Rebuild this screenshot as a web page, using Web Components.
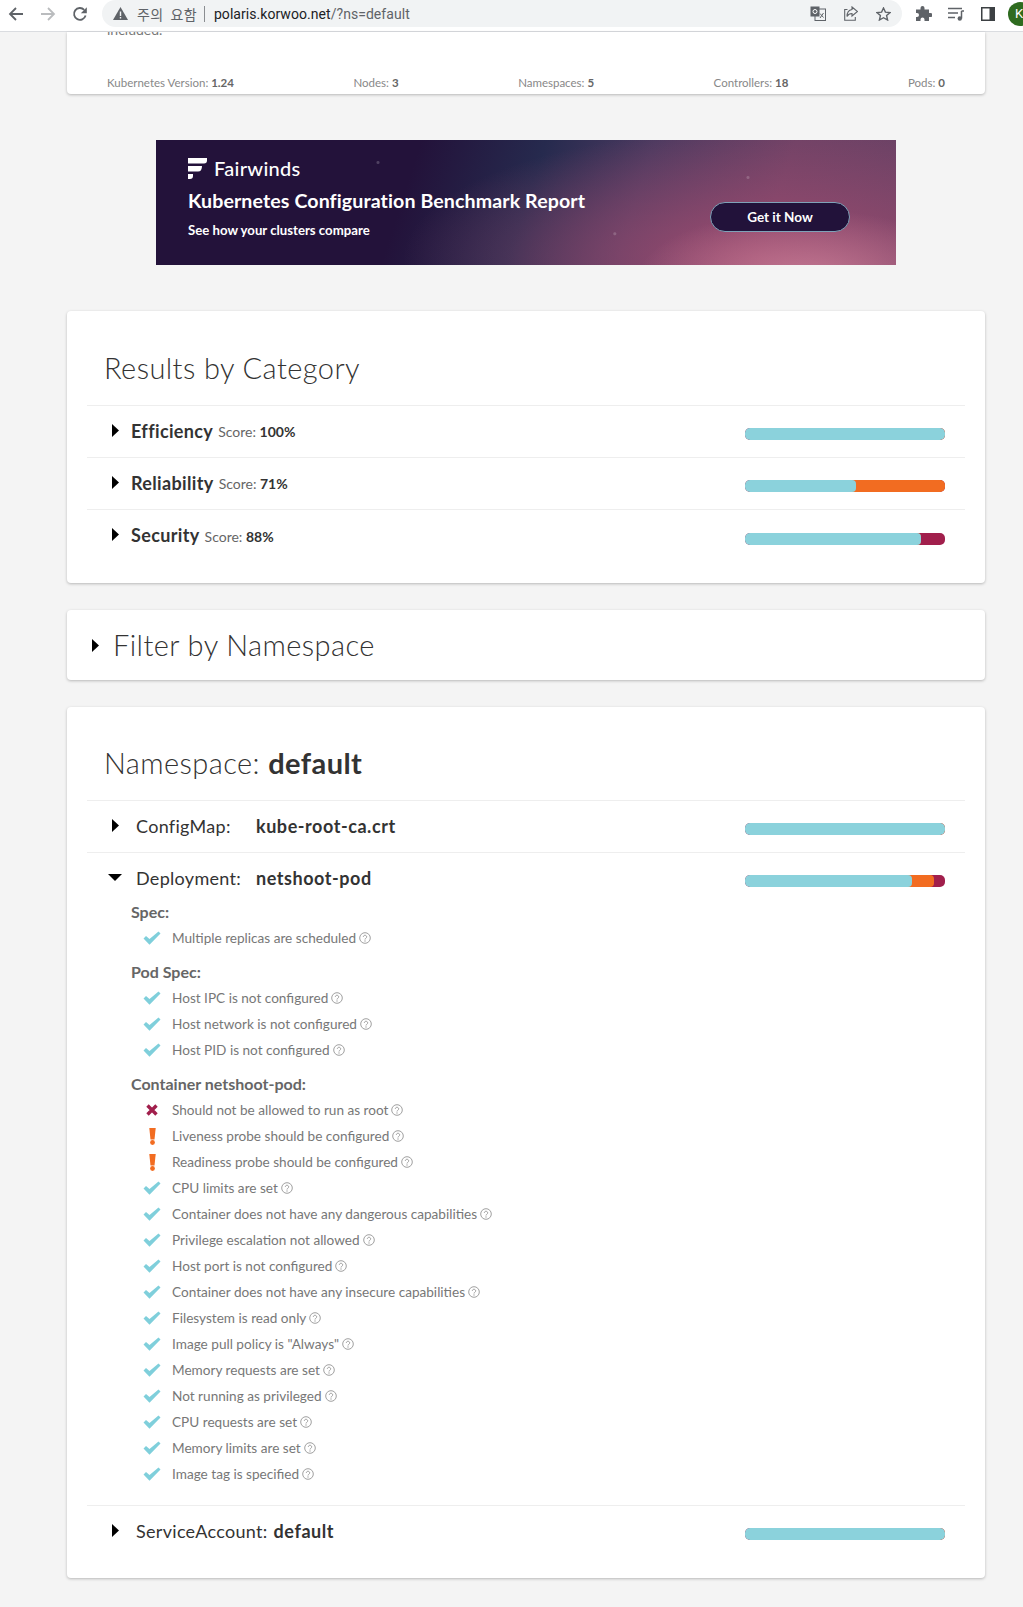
<!DOCTYPE html>
<html lang="ko">
<head>
<meta charset="utf-8">
<title>Polaris</title>
<style>
    html, body { margin: 0; background: #f4f4f4; }
    body { font-family: Lato, "Noto Sans", sans-serif; color: #333; }
    .page { display: block; padding: 0 38px 30px 67px; }
    b { font-weight: 700; }
</style>
</head>
<body>
<app-toolbar></app-toolbar>
<div class="page">
    <cluster-summary>
        <stat-item label="Kubernetes Version:" value="1.24"></stat-item>
        <stat-item label="Nodes:" value="3"></stat-item>
        <stat-item label="Namespaces:" value="5"></stat-item>
        <stat-item label="Controllers:" value="18"></stat-item>
        <stat-item label="Pods:" value="0"></stat-item>
    </cluster-summary>

    <promo-banner></promo-banner>

    <ui-card heading="Results by Category">
        <category-row name="Efficiency" score="100%" pass="100"></category-row>
        <category-row name="Reliability" score="71%" pass="55.5" warn="44.5"></category-row>
        <category-row name="Security" score="88%" pass="88" fail="12"></category-row>
    </ui-card>

    <filter-card></filter-card>

    <ui-card heading="Namespace:" strong="default">
        <resource-row kind="ConfigMap:" name="kube-root-ca.crt" pass="100"></resource-row>
        <resource-row kind="Deployment:" name="netshoot-pod" pass="83.5" warn="11" fail="5.5" open>
            <check-group heading="Spec:">
                <check-item>Multiple replicas are scheduled</check-item>
            </check-group>
            <check-group heading="Pod Spec:">
                <check-item>Host IPC is not configured</check-item>
                <check-item>Host network is not configured</check-item>
                <check-item>Host PID is not configured</check-item>
            </check-group>
            <check-group heading="Container netshoot-pod:">
                <check-item status="fail">Should not be allowed to run as root</check-item>
                <check-item status="warn">Liveness probe should be configured</check-item>
                <check-item status="warn">Readiness probe should be configured</check-item>
                <check-item>CPU limits are set</check-item>
                <check-item>Container does not have any dangerous capabilities</check-item>
                <check-item>Privilege escalation not allowed</check-item>
                <check-item>Host port is not configured</check-item>
                <check-item>Container does not have any insecure capabilities</check-item>
                <check-item>Filesystem is read only</check-item>
                <check-item>Image pull policy is "Always"</check-item>
                <check-item>Memory requests are set</check-item>
                <check-item>Not running as privileged</check-item>
                <check-item>CPU requests are set</check-item>
                <check-item>Memory limits are set</check-item>
                <check-item>Image tag is specified</check-item>
            </check-group>
        </resource-row>
        <resource-row kind="ServiceAccount:" name="default" pass="100" flow></resource-row>
    </ui-card>
</div>

<script>
const CARET_RIGHT = '<svg width="7" height="13" viewBox="0 0 7 13"><path d="M0 0L7 6.5L0 13Z" fill="#000"/></svg>';
const CARET_DOWN = '<svg width="14" height="7" viewBox="0 0 14 7"><path d="M0 0H14L7 7Z" fill="#000"/></svg>';

class AppToolbar extends HTMLElement {
    constructor() {
        super();
        this.attachShadow({ mode: 'open' });
        this.shadowRoot.innerHTML = `
            <style>
                :host { display: flex; height: 31px; background: #fff; border-bottom: 1px solid #dadce0; overflow: hidden; font-family: Roboto, "Liberation Sans", sans-serif; }
                .nav { display: flex; align-items: center; gap: 16px; height: 27px; padding-left: 8px; width: 102px; box-sizing: border-box; flex: none; }
                .omnibox { display: flex; align-items: center; width: 800px; height: 27px; background: #f1f3f4; border-radius: 14px; box-sizing: border-box; padding-left: 11px; font-size: 14px; color: #5f6368; flex: none; }
                .warn { font-family: "Noto Sans CJK KR", sans-serif; font-size: 14px; margin-left: 9px; word-spacing: 3px; letter-spacing: .3px; }
                .sep { width: 1px; height: 16px; background: #8a8d91; margin: 0 9px 0 7px; }
                .url { color: #202124; letter-spacing: .05px; }
                .url span { color: #5f6368; }
                .right { margin-left: auto; display: flex; align-items: center; gap: 18px; padding-right: 11px; }
                .tools { display: flex; align-items: center; gap: 16px; height: 27px; margin-left: 14px; flex: none; }
                svg { flex: none; display: block; }
                .avatar { width: 24px; height: 24px; border-radius: 50%; background: #2e6b1f; color: #fff; font-size: 13px; line-height: 24px; text-indent: 7px; flex: none; margin-left: -3px; }
            </style>
            <div class="nav">
                <svg width="16" height="16" viewBox="0 0 16 16"><path d="M15 8H2.5M8 2L2 8l6 6" fill="none" stroke="#5f6368" stroke-width="1.8"/></svg>
                <svg width="16" height="16" viewBox="0 0 16 16"><path d="M1 8h12.5M8 2l6 6-6 6" fill="none" stroke="#babcbe" stroke-width="1.8"/></svg>
                <svg width="16" height="16" viewBox="0 0 16 16"><path d="M13.6 9.6A5.9 5.9 0 1 1 12.2 3.8" fill="none" stroke="#5f6368" stroke-width="1.8"/><path d="M14.8 1.2v6h-6z" fill="#5f6368"/></svg>
            </div>
            <div class="omnibox">
                <svg width="15" height="13" viewBox="0 0 15 13"><path d="M7.5 0L15 13H0Z" fill="#5f6368"/><path d="M6.8 4.5h1.4v4.5H6.8zM6.8 10h1.4v1.5H6.8z" fill="#f1f3f4"/></svg>
                <span class="warn">주의 요함</span>
                <span class="sep"></span>
                <span class="url">polaris.korwoo.net<span>/?ns=default</span></span>
                <div class="right">
                    <svg width="16" height="15" viewBox="0 0 16 15"><rect x="5" y="3" width="10.5" height="11.5" fill="none" stroke="#5f6368"/><rect x=".5" y=".5" width="9" height="10" fill="#5f6368"/><circle cx="5" cy="5.5" r="2" fill="none" stroke="#fff"/><path d="M10 7.5l3.5 4M13.5 7l-3.5 5" stroke="#5f6368" fill="none"/></svg>
                    <svg width="14" height="15" viewBox="0 0 14 15"><path d="M3.5 3.5H.7v10.800h10.600V11" fill="none" stroke="#5f6368" stroke-width="1.1"/><path d="M8 1l5.5 4.5L8 10V7.500C5.500 7.500 4 8.500 3 10.500 3 6.500 5 4 8 3.500Z" fill="none" stroke="#5f6368" stroke-width="1.1"/></svg>
                    <svg width="15" height="14" viewBox="0 0 15 14"><path d="M7.5 1l1.900 4.100 4.600.5-3.400 3 1 4.400-4.100-2.300L3.400 13l1-4.400-3.400-3 4.600-.5z" fill="none" stroke="#5f6368" stroke-width="1.4"/></svg>
                </div>
            </div>
            <div class="tools">
                <svg width="16" height="15" viewBox="0 0 16 15"><path d="M0 3.5h4.500V2a2 2 0 0 1 4 0v1.500H13V7h1.500a2 2 0 0 1 0 4H13v4H8.500v-1.500a2 2 0 0 0-4 0V15H0v-4h1a2 2 0 0 0 0-4H0z" fill="#5f6368"/></svg>
                <svg width="16" height="14" viewBox="0 0 16 14"><path d="M0 1.500h14M0 6h10M0 10.500h7" stroke="#5f6368" stroke-width="1.5" fill="none"/><path d="M13.500 4v7.500M13.500 4H16" stroke="#5f6368" stroke-width="1.5"/><circle cx="11.800" cy="11.500" r="2.200" fill="#5f6368"/></svg>
                <svg width="14" height="14" viewBox="0 0 14 14" style="margin-left:1px"><rect width="14" height="14" fill="#3c4043"/><rect x="1.500" y="1.500" width="7" height="11" fill="#fff"/></svg>
                <div class="avatar">K</div>
            </div>
        `;
    }
}

class ClusterSummary extends HTMLElement {
    constructor() {
        super();
        this.attachShadow({ mode: 'open' });
        this.shadowRoot.innerHTML = `
            <style>
                :host { display: block; height: 62px; background: #fff; border-radius: 0 0 4px 4px; box-shadow: 0 1px 3px rgba(0,0,0,.25); }
                .clip { height: 5px; overflow: hidden; padding-left: 40px; font-size: 14px; color: #777; }
                .clip div { margin-top: -11px; line-height: 18px; }
                .stats { display: flex; justify-content: space-between; padding: 37px 40px 0; }
            </style>
            <div class="clip"><div>included.</div></div>
            <div class="stats"><slot></slot></div>
        `;
    }
}

class StatItem extends HTMLElement {
    constructor() {
        super();
        this.attachShadow({ mode: 'open' });
        this.shadowRoot.innerHTML = `
            <style>
                :host { display: block; font-size: 11.5px; line-height: 18px; color: #888; }
                b { color: #666; }
            </style>
            ${this.getAttribute('label')} <b>${this.getAttribute('value')}</b>
        `;
    }
}

class PromoBanner extends HTMLElement {
    constructor() {
        super();
        this.attachShadow({ mode: 'open' });
        this.shadowRoot.innerHTML = `
            <style>
                :host { display: flex; align-items: stretch; justify-content: space-between; width: 740px; height: 125px; margin: 46px auto; box-sizing: border-box; padding: 16px 46px 0 32px; color: #fff; font-weight: 700;
                    background:
                        radial-gradient(circle at 30% 18%, rgba(255,255,255,.2) 0 1px, transparent 2px),
                        radial-gradient(circle at 62% 75%, rgba(255,255,255,.18) 0 1px, transparent 2px),
                        radial-gradient(circle at 80% 30%, rgba(255,255,255,.18) 0 1px, transparent 2px),
                        radial-gradient(ellipse 170px 70px at 88% 112%, rgba(200,125,150,.9), transparent),
                        radial-gradient(ellipse 360px 130px at 82% 95%, rgba(158,76,112,.95), transparent),
                        linear-gradient(108deg, #23123a 0%, #23123a 34%, #262a4e 50%, #4c3a60 64%, #704266 82%, #6a4265 100%); }
                .logo { display: flex; align-items: center; gap: 7px; font-size: 20px; font-weight: 500; height: 24px; letter-spacing: .3px; }
                h2 { font-size: 19.6px; line-height: 26px; margin: 8px 0 0; font-weight: 700; letter-spacing: .1px; }
                p { font-size: 13.2px; line-height: 18px; margin: 7px 0 0; }
                .btn { align-self: flex-start; margin-top: 46px; width: 140px; height: 30px; box-sizing: border-box; border: 1px solid #7fa2b8; border-radius: 15px; background: #22123a; font-size: 13.5px; line-height: 28px; text-align: center; }
            </style>
            <div>
                <div class="logo">
                    <svg width="19" height="21" viewBox="0 0 19 21"><path d="M0 0h19v2.500q0 3-3 3H0zM0 8h14q0 5.500-4 5.500H0zM0 16h5v2q0 3-3 3H0z" fill="#fff"/></svg>
                    Fairwinds
                </div>
                <h2>Kubernetes Configuration Benchmark Report</h2>
                <p>See how your clusters compare</p>
            </div>
            <div class="btn">Get it Now</div>
        `;
    }
}

class UiCard extends HTMLElement {
    constructor() {
        super();
        const strong = this.getAttribute('strong');
        this.attachShadow({ mode: 'open' });
        this.shadowRoot.innerHTML = `
            <style>
                :host { display: block; margin-bottom: 27px; padding: 0 20px 21px; background: #fff; border-radius: 4px; box-shadow: 0 1px 3px rgba(0,0,0,.25); }
                h2 { margin: 0; padding: 37px 17px 17px; font-size: 29px; line-height: 40px; font-weight: 300; color: #333; letter-spacing: .42px; }
                :host([strong]) h2 { padding-top: 36px; }
                b { font-weight: 700; }
            </style>
            <h2>${this.getAttribute('heading')}${strong ? ` <b>${strong}</b>` : ''}</h2>
            <slot></slot>
        `;
    }
}

class StatusBar extends HTMLElement {
    constructor() {
        super();
        const pass = this.getAttribute('pass') || 0;
        const warn = this.getAttribute('warn') || 0;
        this.attachShadow({ mode: 'open' });
        this.shadowRoot.innerHTML = `
            <style>
                :host { display: flex; width: 200px; height: 12px; border-radius: 5px; overflow: hidden; background: #a11f4c; flex: none; }
                div { height: 100%; border-radius: 0 4px 4px 0; margin-right: -4px; padding-right: 4px; }
                .pass { background: #8bd2dc; position: relative; z-index: 2; }
                .warn { background: #f26c21; position: relative; z-index: 1; }
            </style>
            <div class="pass" style="width: calc(${pass}% - 4px)"></div>
            <div class="warn" style="width: ${warn}%"></div>
        `;
    }
}

class CategoryRow extends HTMLElement {
    constructor() {
        super();
        this.attachShadow({ mode: 'open' });
        this.shadowRoot.innerHTML = `
            <style>
                :host { display: flex; align-items: center; height: 51px; border-top: 1px solid #eee; padding: 0 20px 0 25px; color: #333; }
                :host(:last-child) { height: 52px; }
                .caret { display: flex; margin-right: 12px; margin-top: -3px; }
                .text { display: flex; align-items: center; margin-top: -2px; }
                .name { font-size: 18px; font-weight: 700; letter-spacing: .35px; }
                .score { font-size: 14px; color: #666; margin-left: 5px; margin-top: 2px; }
                .score b { color: #333; }
                status-bar { margin-left: auto; margin-top: 5px; }
            </style>
            <span class="caret">${CARET_RIGHT}</span>
            <span class="text">
                <span class="name">${this.getAttribute('name')}</span>
                <span class="score">Score: <b>${this.getAttribute('score')}</b></span>
            </span>
            <status-bar pass="${this.getAttribute('pass') || 0}" warn="${this.getAttribute('warn') || 0}"></status-bar>
        `;
    }
}

class FilterCard extends HTMLElement {
    constructor() {
        super();
        this.attachShadow({ mode: 'open' });
        this.shadowRoot.innerHTML = `
            <style>
                :host { display: flex; align-items: center; height: 70px; margin-bottom: 27px; padding-left: 25px; background: #fff; border-radius: 4px; box-shadow: 0 1px 3px rgba(0,0,0,.25); }
                span { display: flex; margin-right: 14px; }
                h2 { margin: 0; margin-top: -2px; font-size: 29px; font-weight: 300; color: #333; letter-spacing: .42px; }
            </style>
            <span>${CARET_RIGHT}</span>
            <h2>Filter by Namespace</h2>
        `;
    }
}

class ResourceRow extends HTMLElement {
    constructor() {
        super();
        const open = this.hasAttribute('open');
        this.attachShadow({ mode: 'open' });
        this.shadowRoot.innerHTML = `
            <style>
                :host { display: block; border-top: 1px solid #eee; color: #333; }
                .head { display: flex; align-items: center; height: 51px; padding-right: 20px; }
                .caret { display: flex; justify-content: center; width: 14px; margin: -3px 14px 0 21px; }
                .text { display: flex; align-items: center; margin-top: -2px; }
                .kind { font-size: 18px; font-weight: 400; min-width: 120px; letter-spacing: .3px; }
                :host([flow]) .kind { min-width: 0; margin-right: 6px; }
                .name { font-size: 18px; font-weight: 700; letter-spacing: .55px; }
                status-bar { margin-left: auto; margin-top: 5px; }
                .body { margin-top: -5px; padding: 0 0 18px 44px; }
            </style>
            <div class="head">
                <span class="caret">${open ? CARET_DOWN : CARET_RIGHT}</span>
                <span class="text">
                    <span class="kind">${this.getAttribute('kind')}</span>
                    <span class="name">${this.getAttribute('name')}</span>
                </span>
                <status-bar pass="${this.getAttribute('pass') || 0}" warn="${this.getAttribute('warn') || 0}"></status-bar>
            </div>
            ${open ? '<div class="body"><slot></slot></div>' : ''}
        `;
    }
}

class CheckGroup extends HTMLElement {
    constructor() {
        super();
        this.attachShadow({ mode: 'open' });
        this.shadowRoot.innerHTML = `
            <style>
                :host { display: block; margin-bottom: 8px; }
                :host(:last-child) { margin-bottom: 0; }
                h4 { margin: 0; font-size: 16px; line-height: 26px; font-weight: 700; color: #666; }
                .items { padding-left: 11px; }
            </style>
            <h4>${this.getAttribute('heading')}</h4>
            <div class="items"><slot></slot></div>
        `;
    }
}

class CheckItem extends HTMLElement {
    constructor() {
        super();
        const icons = {
            pass: '<svg width="18" height="14" viewBox="0 0 18 14"><path d="M0.5 7.500L3 5L6.500 8L15.500 0.500L17.500 2.500L6.500 13.800Z" fill="#7fcfdb"/></svg>',
            fail: '<svg width="12" height="12" viewBox="0 0 12 12"><path d="M1.500 1.500L10.500 10.500M10.500 1.500L1.500 10.500" stroke="#a11f4c" stroke-width="3.4" fill="none"/></svg>',
            warn: '<svg width="7" height="17" viewBox="0 0 7 17"><path d="M0.3 0H6.700L5.500 11.500H1.500Z" fill="#f26c21"/><circle cx="3.5" cy="14.500" r="2.400" fill="#f26c21"/></svg>'
        };
        const status = this.getAttribute('status') || 'pass';
        this.attachShadow({ mode: 'open' });
        this.shadowRoot.innerHTML = `
            <style>
                :host { display: flex; align-items: center; height: 26px; font-size: 13.6px; color: #777; }
                .icon { display: flex; align-items: center; justify-content: center; width: 20px; margin-right: 10px; }
                .help { display: flex; margin-left: 3px; }
            </style>
            <span class="icon">${icons[status]}</span>
            <slot></slot>
            <span class="help"><svg width="12" height="12" viewBox="0 0 12 12"><circle cx="6" cy="6" r="5.3" fill="none" stroke="#a0a0a0"/><path d="M4.300 4.800a1.700 1.600 0 1 1 2.600 1.400c-.6.400-.9.700-.9 1.300" fill="none" stroke="#a0a0a0"/><circle cx="6" cy="9" r=".7" fill="#a0a0a0"/></svg></span>
        `;
    }
}

customElements.define('app-toolbar', AppToolbar);
customElements.define('cluster-summary', ClusterSummary);
customElements.define('stat-item', StatItem);
customElements.define('promo-banner', PromoBanner);
customElements.define('ui-card', UiCard);
customElements.define('status-bar', StatusBar);
customElements.define('category-row', CategoryRow);
customElements.define('filter-card', FilterCard);
customElements.define('resource-row', ResourceRow);
customElements.define('check-group', CheckGroup);
customElements.define('check-item', CheckItem);
</script>
</body>
</html>
